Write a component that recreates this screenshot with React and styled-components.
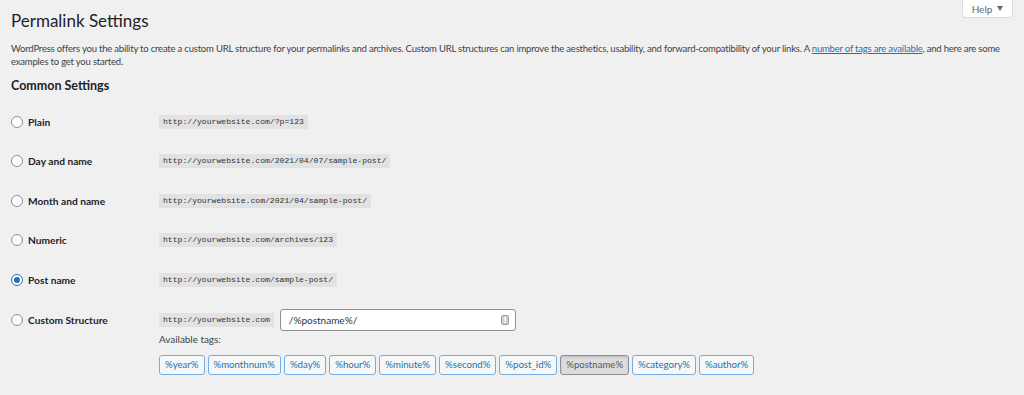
import React from 'react'
import styled, { createGlobalStyle } from 'styled-components'

const GlobalStyle = createGlobalStyle`
  body {
    margin: 0;
    background: #f0f0f1;
    font-family: Lato, "Open Sans", sans-serif;
    color: #3c434a;
  }
`

const Page = styled.div`
  padding: 0 11px;
`

const Header = styled.div`
  display: flex;
  justify-content: space-between;
  align-items: flex-start;
`

const Title = styled.h1`
  margin: 10px 0 0;
  font-size: 17px;
  line-height: 22px;
  font-weight: 400;
  color: #1d2327;
`

const HelpButton = styled.button`
  display: flex;
  align-items: center;
  gap: 5px;
  height: 18px;
  width: 51px;
  justify-content: center;
  padding: 0;
  background: #fff;
  border: 1px solid #dcdcde;
  border-top: none;
  border-radius: 0 0 4px 4px;
  font-family: inherit;
  font-size: 10px;
  color: #646970;
`

const Caret = styled.span`
  width: 0;
  height: 0;
  border-left: 3px solid transparent;
  border-right: 3px solid transparent;
  border-top: 5px solid #646970;
`

const Intro = styled.p`
  margin: 9.5px 0 0;
  font-size: 9.5px;
  letter-spacing: -0.2px;
  line-height: 13px;
  max-width: 1002px;
`

const Link = styled.a`
  color: #2271b1;
  text-decoration: underline;
`

const SectionTitle = styled.h2`
  margin: 10.5px 0 8px;
  font-size: 12.5px;
  line-height: 16px;
  font-weight: 700;
  color: #1d2327;
`

const Row = styled.div`
  display: grid;
  grid-template-columns: 148px 1fr;
  align-items: ${p => (p.top ? 'start' : 'center')};
  height: ${p => (p.top ? 'auto' : '39.5px')};
  padding-top: ${p => (p.top ? '9px' : '0')};
`

const Label = styled.label`
  display: flex;
  align-items: center;
  gap: 5px;
  font-size: 10.2px;
  font-weight: 700;
  color: #1d2327;
  height: ${p => (p.tall ? '22px' : 'auto')};
`

const Radio = styled.span`
  box-sizing: border-box;
  width: 12px;
  height: 12px;
  border-radius: 50%;
  background: #fff;
  border: 1px solid ${p => (p.checked ? '#2271b1' : '#8c8f94')};
  display: flex;
  align-items: center;
  justify-content: center;

  &::after {
    content: '';
    display: ${p => (p.checked ? 'block' : 'none')};
    width: 6px;
    height: 6px;
    border-radius: 50%;
    background: #2271b1;
  }
`

const Code = styled.code`
  justify-self: start;
  background: #e2e2e3;
  padding: 2px 4px;
  font-family: "Liberation Mono", "DejaVu Sans Mono", monospace;
  font-size: 8.1px;
  line-height: 10px;
  color: #2c3338;
`

const CustomCell = styled.div`
  display: flex;
  flex-direction: column;
`

const InputLine = styled.div`
  display: flex;
  align-items: center;
  gap: 6px;
`

const Input = styled.div`
  box-sizing: border-box;
  width: 236px;
  height: 22px;
  background: #fff;
  border: 1px solid #8c8f94;
  border-radius: 3px;
  display: flex;
  align-items: center;
  justify-content: space-between;
  padding: 0 6px 0 8px;
  font-size: 10px;
  color: #2c3338;
`

const TagsLabel = styled.div`
  margin-top: 1px;
  font-size: 9.9px;
  line-height: 14px;
  color: #3c434a;
`

const Tags = styled.div`
  display: flex;
  gap: 3px;
  margin-top: 9px;
`

const Tag = styled.button`
  box-sizing: border-box;
  height: 20px;
  padding: 0 5px;
  font-family: inherit;
  font-size: 9.6px;
  border-radius: 3px;
  border: 1px solid ${p => (p.active ? '#8c8f94' : '#72aee6')};
  background: ${p => (p.active ? '#dcdcde' : '#f6f7f7')};
  color: ${p => (p.active ? '#50575e' : '#2271b1')};
  box-shadow: ${p => (p.active ? 'inset 0 1px 2px rgba(0,0,0,.15)' : 'none')};
`

const options = [
  ['Plain', 'http://yourwebsite.com/?p=123'],
  ['Day and name', 'http://yourwebsite.com/2021/04/07/sample-post/'],
  ['Month and name', 'http:/yourwebsite.com/2021/04/sample-post/'],
  ['Numeric', 'http://yourwebsite.com/archives/123'],
  ['Post name', 'http://yourwebsite.com/sample-post/'],
]

const tags = ['%year%', '%monthnum%', '%day%', '%hour%', '%minute%', '%second%', '%post_id%', '%postname%', '%category%', '%author%']

function FieldIcon() {
  return (
    <svg width="8" height="10" viewBox="0 0 8 10">
      <rect x="0.5" y="0.5" width="7" height="9" rx="1.5" fill="#d0d0d2" stroke="#9a9ca0" />
      <rect x="3.3" y="2.2" width="1.4" height="3.6" fill="#fff" />
      <rect x="3.3" y="6.6" width="1.4" height="1.4" fill="#fff" />
    </svg>
  )
}

export default function App() {
  return (
    <Page>
      <GlobalStyle />
      <Header>
        <Title>Permalink Settings</Title>
        <HelpButton>Help <Caret /></HelpButton>
      </Header>
      <Intro>
        WordPress offers you the ability to create a custom URL structure for your permalinks and archives. Custom URL structures can improve the aesthetics, usability, and forward-compatibility of your links. A <Link>number of tags are available</Link>, and here are some examples to get you started.
      </Intro>
      <SectionTitle>Common Settings</SectionTitle>
      {options.map(([label, url]) => (
        <Row key={label}>
          <Label><Radio checked={label === 'Post name'} />{label}</Label>
          <Code>{url}</Code>
        </Row>
      ))}
      <Row top>
        <Label tall><Radio />Custom Structure</Label>
        <CustomCell>
          <InputLine>
            <Code>http://yourwebsite.com</Code>
            <Input>/%postname%/<FieldIcon /></Input>
          </InputLine>
          <TagsLabel>Available tags:</TagsLabel>
          <Tags>
            {tags.map(t => (
              <Tag key={t} active={t === '%postname%'}>{t}</Tag>
            ))}
          </Tags>
        </CustomCell>
      </Row>
    </Page>
  )
}
